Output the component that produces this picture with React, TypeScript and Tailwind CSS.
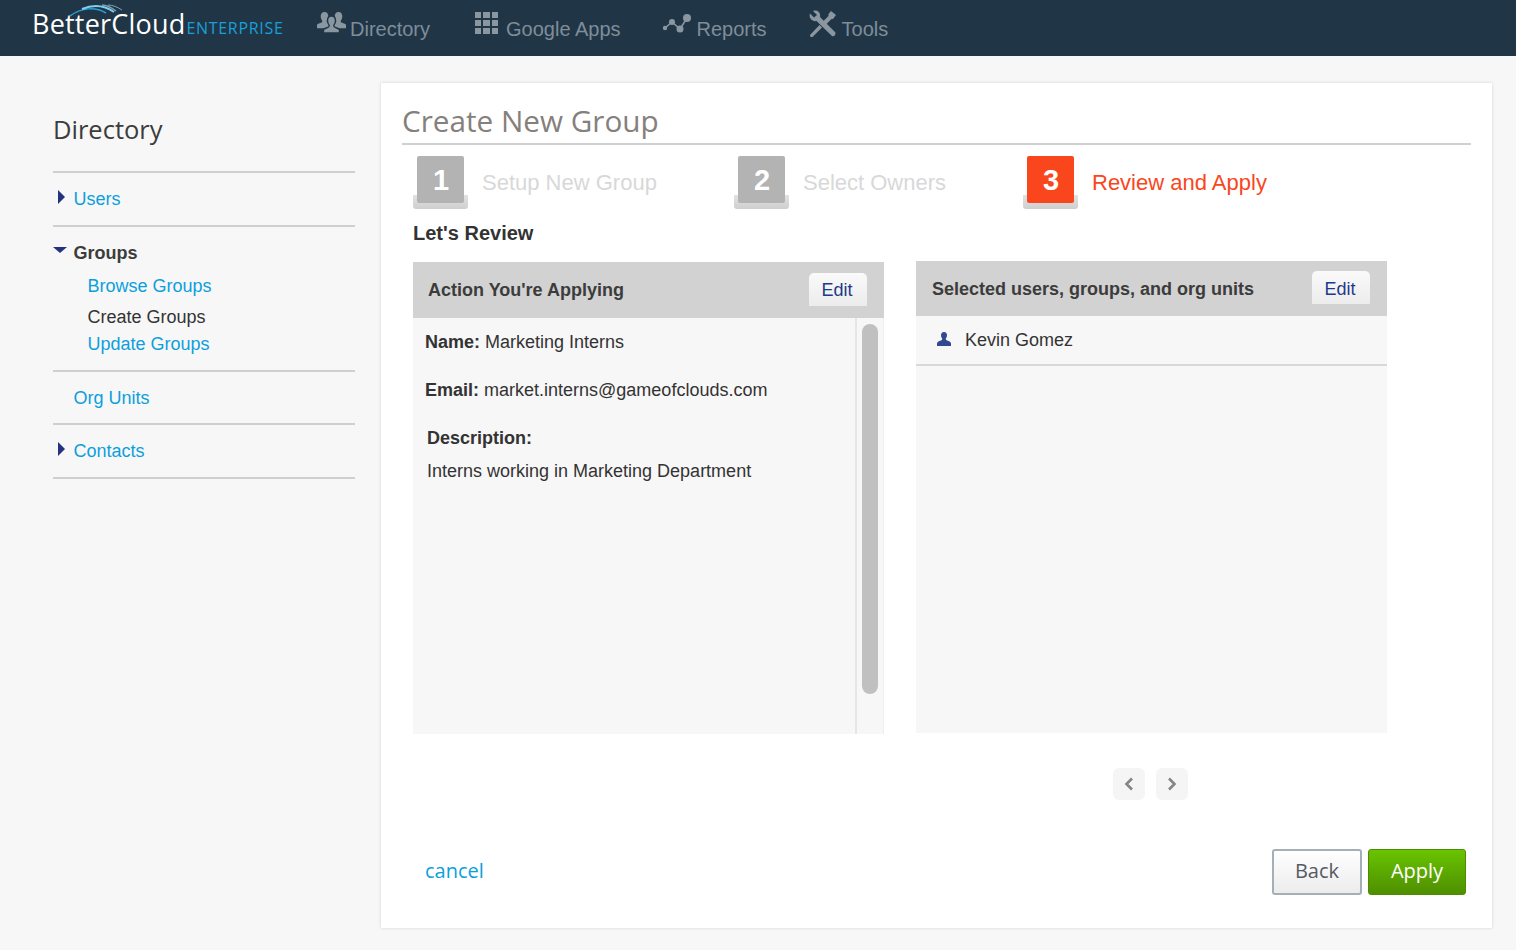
import React from 'react';

const arial = "font-['Liberation_Sans',Arial,sans-serif]";
const open = "font-['Open_Sans',sans-serif]";

const NavItem = ({ icon, label, className }: { icon: React.ReactNode; label: string; className: string }) => (
  <div className={`flex items-start text-[20px] text-[#7f8d99] ${className}`}>
    {icon}
    <span className="leading-[24px] mt-[17px]">{label}</span>
  </div>
);

const Person = ({ cx, cy, s, gap }: { cx: number; cy: number; s: number; gap?: boolean }) => (
  <path
    transform={`translate(${cx} ${cy}) scale(${s})`}
    stroke={gap ? '#203647' : 'none'}
    strokeWidth={gap ? 1.4 : 0}
    d="M0 0c2.600 0 4 2 4 4.600 0 2-.7 3.700-1.700 4.800 0 1 .5 1.500 1.500 2 1.500.7 3.200 1.100 4.200 2.100V17H-8v-3.500c1-1 2.700-1.400 4.200-2.100 1-.5 1.500-1 1.500-2C-3.300 8.300-4 6.600-4 4.600-4 2-2.600 0 0 0z"
  />
);

const PeopleIcon = () => (
  <svg width="29" height="24" viewBox="0 0 29 24" className="mt-[11px] mr-[4px]" fill="#8a97a1">
    <Person cx={7.500} cy={1} s={0.95} />
    <Person cx={21.500} cy={1} s={0.95} />
    <Person cx={14.500} cy={5} s={1} gap />
  </svg>
);

const GridIcon = () => (
  <div className="grid grid-cols-3 gap-[2px] w-[23px] mt-[12px] mr-[8px]">
    {Array.from({ length: 9 }).map((_, i) => (
      <div key={i} className="h-[6px] bg-[#8a97a1]" />
    ))}
  </div>
);

const ReportsIcon = () => (
  <svg width="29" height="22" viewBox="0 0 29 22" className="mt-[11px] mr-[6px]" fill="#8a97a1" stroke="#8a97a1">
    <path d="M3 17 L10 11 L18 18 L25 7" fill="none" strokeWidth="1.500" />
    <circle cx="3" cy="17" r="2.200" stroke="none" />
    <circle cx="10" cy="11" r="3" stroke="none" />
    <circle cx="18" cy="18" r="3.500" stroke="none" />
    <circle cx="25" cy="7" r="4" stroke="none" />
  </svg>
);

const ToolsIcon = () => (
  <svg width="28" height="28" viewBox="0 0 28 28" className="mt-[10px] mr-[5px]" fill="#8a97a1">
    <path d="M1 3.500 L5 7.500 L8 5 L4 1 C8 -.5 12 2.500 11 7 L26 22 C27.500 24 25.500 27 23 26 L7.500 11 C3 12 -.5 8 1 3.500z" />
    <path d="M22 1 L27 5 L24 9 L22.500 9 L16.500 15 L13.500 12 L19.500 6 L19.500 4z" />
    <path d="M10.500 15 L13 17.500 L3.500 27 L1.500 27 L1 25z" />
  </svg>
);

const Logo = () => (
  <div className="relative flex items-baseline ml-[32px] mt-[6px] w-[270px] h-[40px]">
    <svg width="56" height="14" viewBox="0 0 56 14" className="absolute left-[38px] top-[-2px]" fill="none">
      <path d="M0 12 C12 3 26 3 36 9" stroke="#2a9fd6" strokeWidth="1.500" />
      <path d="M12 5 C24 0 34 1 44 8" stroke="#7fd0ef" strokeWidth="2" />
      <path d="M32 1 C38 1 42 4 46 7" stroke="#7aa3b8" strokeWidth="1.500" />
      <path d="M38 1 C43 1 47 3 52 6" stroke="#7aa3b8" strokeWidth="1" />
    </svg>
    <span className={`${open} text-[27px] leading-[34px] mt-[1px] text-white tracking-[0.2px]`}>BetterCloud</span>
    <span className={`${open} text-[16px] text-[#1a9fd9] ml-[1px] tracking-[0.700px]`}>ENTERPRISE</span>
  </div>
);

const Step = ({ n, label, active, className }: { n: number; label: string; active?: boolean; className: string }) => (
  <div className={`flex items-start ${className}`}>
    <div className="relative w-[55px] h-[53px]">
      <div className="absolute left-0 right-0 bottom-0 h-[14px] rounded-b-[3px] bg-gradient-to-b from-[#e2e2e2] to-[#cfcfcf]" />
      <div
        className={`${arial} absolute left-[4px] top-0 w-[47px] h-[47px] rounded-[2px] flex items-center justify-center text-white font-bold text-[29px] pl-[1px] pt-[2px] ${
          active ? 'bg-[#f9461c]' : 'bg-[#b3b3b3]'
        }`}
      >
        {n}
      </div>
    </div>
    <div className={`${arial} ml-[14px] mt-[13px] text-[22px] leading-[28px] ${active ? 'text-[#f9461c]' : 'text-[#d8d8d8]'}`}>{label}</div>
  </div>
);

const EditButton = () => (
  <div className={`${arial} w-[58px] h-[33px] -mt-[2px] rounded-t-[5px] bg-gradient-to-b from-[#fafafa] to-[#ececec] text-[#1f3a8a] text-[18px] flex items-center justify-center pr-[2px] pt-[3px]`}>
    Edit
  </div>
);

const Arrow = () => <div className="w-0 h-0 border-y-[7px] border-y-transparent border-l-[7px] border-l-[#24327f]" />;

export default function App() {
  return (
    <div className={`${arial} w-[1516px] h-[950px] bg-[#f7f7f7] overflow-hidden`}>
      {/* Header */}
      <div className="h-[56px] bg-[#203647] flex">
        <Logo />
        <NavItem icon={<PeopleIcon />} label="Directory" className="ml-[15px]" />
        <NavItem icon={<GridIcon />} label="Google Apps" className="ml-[45px]" />
        <NavItem icon={<ReportsIcon />} label="Reports" className="ml-[41px]" />
        <NavItem icon={<ToolsIcon />} label="Tools" className="ml-[42px]" />
      </div>

      <div className="flex">
        {/* Sidebar */}
        <div className="w-[302px] ml-[53px] mt-[54px] shrink-0 text-[18px]">
          <h2 className={`${open} text-[25.500px] leading-[38px] text-[#3c3c3c] mb-[23px]`}>Directory</h2>
          <div className="border-t-2 border-[#cfcfcf] h-[54px] flex items-center pt-[1px]">
            <div className="w-[21px] pl-[5px] -mt-[5px]"><Arrow /></div>
            <span className="text-[#0c9fdc] -ml-[0.500px]">Users</span>
          </div>
          <div className="border-t-2 border-[#cfcfcf] h-[145px] pt-[15px]">
            <div className="flex items-center h-[22px]">
              <div className="w-[21px] -mt-[7px]">
                <div className="w-0 h-0 border-x-[7px] border-x-transparent border-t-[6px] border-t-[#24327f]" />
              </div>
              <span className="font-bold text-[#3c3c3c] -ml-[0.500px]">Groups</span>
            </div>
            <div className="ml-[34.500px] mt-[11px] text-[#0c9fdc] leading-[22px]">Browse Groups</div>
            <div className="ml-[34.500px] mt-[9px] text-[#333333] leading-[22px]">Create Groups</div>
            <div className="ml-[34.500px] mt-[5px] text-[#0c9fdc] leading-[22px]">Update Groups</div>
          </div>
          <div className="border-t-2 border-[#cfcfcf] h-[53px] flex items-center pl-[20.500px] pt-[2px] text-[#0c9fdc]">Org Units</div>
          <div className="border-t-2 border-[#cfcfcf] border-b-2 h-[56px] flex items-center">
            <div className="w-[21px] pl-[5px] -mt-[5px]"><Arrow /></div>
            <span className="text-[#0c9fdc] -ml-[0.500px]">Contacts</span>
          </div>
        </div>

        {/* Main card */}
        <div className="w-[1111px] h-[845px] ml-[26px] mt-[27px] bg-white shadow-[0_0_3px_rgba(0,0,0,0.15)] px-[21px] pt-[16px] flex flex-col">
          <h1 className={`${open} text-[29.700px] leading-[44px] text-[#85807c] border-b-2 border-[#d0d0d0] h-[46px]`}>Create New Group</h1>

          <div className="flex mt-[11px] h-[53px]">
            <Step n={1} label="Setup New Group" className="ml-[11px] w-[321px]" />
            <Step n={2} label="Select Owners" className="w-[289px]" />
            <Step n={3} label="Review and Apply" active className="" />
          </div>

          <div className="ml-[11px] mt-[11px] font-bold text-[20px] leading-[26px] text-[#333333]">Let's Review</div>

          <div className="flex ml-[11px] mt-[15px] items-start">
            {/* Action panel */}
            <div className="w-[471px] h-[472px] bg-[#f7f7f7] flex flex-col mt-[1px]">
              <div className="h-[56px] bg-[#d2d2d2] flex items-center justify-between pl-[15px] pr-[17px] shrink-0">
                <span className="font-bold text-[18px] text-[#3c3c3c]">Action You're Applying</span>
                <EditButton />
              </div>
              <div className="flex flex-1 min-h-0">
                <div className="flex-1 border-r-2 border-[#e6e6e6] pl-[12px] pt-[13px] text-[18px] text-[#333333] leading-[22px]">
                  <div><b>Name:</b> Marketing Interns</div>
                  <div className="mt-[26px]"><b>Email:</b> market.interns@gameofclouds.com</div>
                  <div className="mt-[26px] ml-[2px] font-bold">Description:</div>
                  <div className="mt-[11px] ml-[2px]">Interns working in Marketing Department</div>
                </div>
                <div className="w-[27px] pl-[5px] pt-[6px] border-r border-[#eeeeee]">
                  <div className="w-[16px] h-[370px] rounded-full bg-[#c0c0c0]" />
                </div>
              </div>
            </div>

            {/* Selected panel */}
            <div className="w-[471px] h-[472px] ml-[32px] bg-[#f7f7f7]">
              <div className="h-[55px] bg-[#d2d2d2] flex items-center justify-between pl-[16px] pr-[17px]">
                <span className="font-bold text-[18px] text-[#3c3c3c] pt-[2px]">Selected users, groups, and org units</span>
                <EditButton />
              </div>
              <div className="h-[50px] border-b-2 border-[#d8d8d8] flex items-center pl-[21px] text-[18px] text-[#333333]">
                <svg width="14" height="14" viewBox="0 0 14 14" fill="#2f4a8f" className="mr-[14px] -mt-[3px]">
                  <path d="M7 0c2 0 3 1.500 3 3.300 0 1.400-.6 2.700-1.300 3.400 0 .9.500 1.300 1.500 1.700 1.500.6 3.800 1.200 3.800 3.100V14H0v-2.500c0-1.900 2.300-2.500 3.800-3.100 1-.4 1.500-.8 1.500-1.700C4.600 6 4 4.700 4 3.300 4 1.500 5 0 7 0z" />
                </svg>
                Kevin Gomez
              </div>
            </div>
          </div>

          {/* Pager */}
          <div className="flex ml-[711px] mt-[34px] gap-[11px]">
            <div className="w-[32px] h-[32px] rounded-[6px] bg-[#f5f5f5] flex items-center justify-center">
              <svg width="10" height="14" viewBox="0 0 10 14" fill="none" stroke="#858585" strokeWidth="2.600"><path d="M8 1.500 L2.500 7 L8 12.500" /></svg>
            </div>
            <div className="w-[32px] h-[32px] rounded-[6px] bg-[#f5f5f5] flex items-center justify-center">
              <svg width="10" height="14" viewBox="0 0 10 14" fill="none" stroke="#858585" strokeWidth="2.600"><path d="M2 1.500 L7.500 7 L2 12.500" /></svg>
            </div>
          </div>

          {/* Footer */}
          <div className="flex items-center justify-between mt-[49px] ml-[23px] mr-[5px]">
            <span className={`${open} text-[20px] text-[#0c9fdc] pb-[2px]`}>cancel</span>
            <div className="flex gap-[6px]">
              <div className={`${open} w-[90px] h-[46px] rounded-[3px] border-2 border-[#a5b0b6] bg-gradient-to-b from-white to-[#ececec] text-[#555a63] text-[20px] flex items-center justify-center pb-[3px]`}>Back</div>
              <div className={`${open} w-[98px] h-[46px] rounded-[3px] border border-[#4c8c00] bg-gradient-to-b from-[#69c400] to-[#4e8f00] text-white text-[20px] flex items-center justify-center pb-[2px]`}>Apply</div>
            </div>
          </div>
        </div>
      </div>
    </div>
  );
}
